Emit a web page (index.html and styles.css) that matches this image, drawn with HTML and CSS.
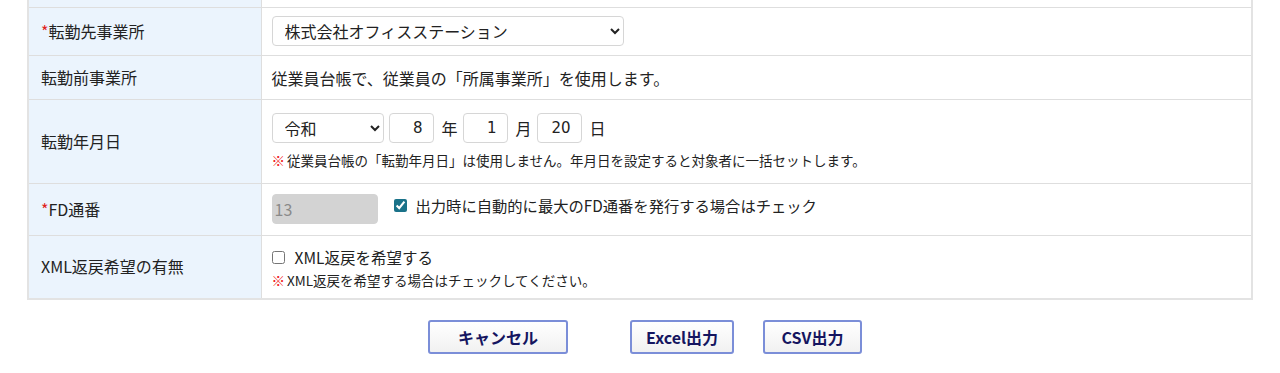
FILE: index.html
```html
<!DOCTYPE html>
<html lang="ja">
<head>
<meta charset="utf-8">
<link rel="stylesheet" href="styles.css">
</head>
<body>
<table class="form">
  <tr class="row-top"><th></th><td></td></tr>
  <tr class="row-1">
    <th><span class="req">*</span>転勤先事業所</th>
    <td>
      <select class="sel-office"><option>株式会社オフィスステーション</option></select>
    </td>
  </tr>
  <tr class="row-2">
    <th>転勤前事業所</th>
    <td>従業員台帳で、従業員の「所属事業所」を使用します。</td>
  </tr>
  <tr class="row-3">
    <th>転勤年月日</th>
    <td>
      <div class="date-line">
        <select class="sel-era"><option>令和</option></select>
        <input class="num" type="text" value="8"><span class="unit">年</span>
        <input class="num" type="text" value="1"><span class="unit">月</span>
        <input class="num" type="text" value="20"><span class="unit">日</span>
      </div>
      <div class="note"><span class="mark">※</span>従業員台帳の「転勤年月日」は使用しません。年月日を設定すると対象者に一括セットします。</div>
    </td>
  </tr>
  <tr class="row-4">
    <th><span class="req">*</span>FD通番</th>
    <td>
      <div class="fd-line">
        <input class="fd" type="text" value="13" disabled>
        <label class="chk"><input type="checkbox" checked>出力時に自動的に最大のFD通番を発行する場合はチェック</label>
      </div>
    </td>
  </tr>
  <tr class="row-5">
    <th>XML返戻希望の有無</th>
    <td>
      <label class="chk chk-xml"><input type="checkbox">XML返戻を希望する</label>
      <div class="note"><span class="mark">※</span>XML返戻を希望する場合はチェックしてください。</div>
    </td>
  </tr>
</table>
<div class="buttons">
  <button class="btn btn-cancel">キャンセル</button>
  <button class="btn btn-excel">Excel出力</button>
  <button class="btn btn-csv">CSV出力</button>
</div>
</body>
</html>
```
FILE: styles.css
```css
html, body {
  margin: 0;
  padding: 0;
  background: #fff;
}
body {
  padding: 0 27px;
  font-family: "Noto Sans CJK JP", "Noto Sans", sans-serif;
  font-size: 16px;
  color: #222;
}
.form {
  width: 1226px;
  border-collapse: collapse;
  border: 2px solid #e3e3e3;
  border-top: none;
}
.form th, .form td {
  border: 1px solid #dedede;
  vertical-align: middle;
  text-align: left;
  font-weight: normal;
  padding: 0;
}
.form th {
  width: 233px;
  background: #ebf4fd;
  padding-left: 12px;
  padding-bottom: 2px;
  box-sizing: border-box;
}
.form td {
  padding-left: 10px;
  background: #fff;
}
.row-top th, .row-top td {
  height: 7px;
  border-top: none;
  padding-bottom: 0;
}
.row-1 th, .row-1 td { height: 47px; }
.row-2 th, .row-2 td { height: 43px; }
.row-3 th, .row-3 td { height: 83px; }
.row-4 th, .row-4 td { height: 51px; }
.row-5 th, .row-5 td { height: 62px; }

.req { color: #e0211b; }

select, input[type=text] {
  font-family: "Noto Sans CJK JP", "Noto Sans", sans-serif;
  font-size: 16px;
  color: #222;
  border: 1px solid #d6d6d6;
  border-radius: 4px;
  background: #fff;
  height: 30px;
  box-sizing: border-box;
  margin: 0;
}
select {
  padding: 0 6px 0 8px;
}
.sel-office { width: 352px; margin-bottom: 2px; }
.date-line {
  display: flex;
  align-items: center;
}
.sel-era { width: 112px; margin-right: 5px !important; }
.num {
  width: 45px;
  text-align: right;
  padding: 0 10px 0 4px;
  font-family: "DejaVu Sans", sans-serif !important;
  font-size: 15px !important;
}
.unit {
  margin-left: 8px;
  margin-right: 5px;
}
.note {
  font-size: 13.5px;
  margin-top: 7px;
  color: #222;
}
.mark {
  color: #f01818;
  font-weight: 900;
  margin-right: 2px;
}
.fd-line {
  display: flex;
  align-items: center;
}
.fd {
  width: 106px;
  background: #d3d3d3 !important;
  border-color: #d3d3d3 !important;
  color: #8a8a8a !important;
  padding-left: 2px;
  margin-bottom: 2px !important;
}
.chk {
  display: inline-flex;
  align-items: center;
}
.chk input {
  width: 13px;
  height: 13px;
  margin: 0 9px 0 0;
  accent-color: #1a7289;
}
.fd-line .chk {
  margin-left: 16px;
  margin-top: -9px;
  font-size: 15.3px;
}
.fd-line .chk input { margin-right: 9px; }
.chk-xml {
  margin-left: 0;
  font-size: 15.5px;
}
.chk-xml input { margin-right: 10px; }
.row-5 .note { margin-top: 1px; }

.buttons {
  display: flex;
  padding-top: 20px;
  padding-left: 401px;
}
.btn {
  font-family: "Noto Sans CJK JP", "Noto Sans", sans-serif;
  font-size: 16px;
  font-weight: bold;
  color: #151560;
  border: 2px solid #7b8ed8;
  border-radius: 3px;
  background: linear-gradient(#ffffff, #f1f1f1);
  height: 34px;
  padding: 0;
}
.btn-cancel { width: 140px; }
.btn-excel { width: 104px; margin-left: 62px; }
.btn-csv { width: 99px; margin-left: 29px; }
```
